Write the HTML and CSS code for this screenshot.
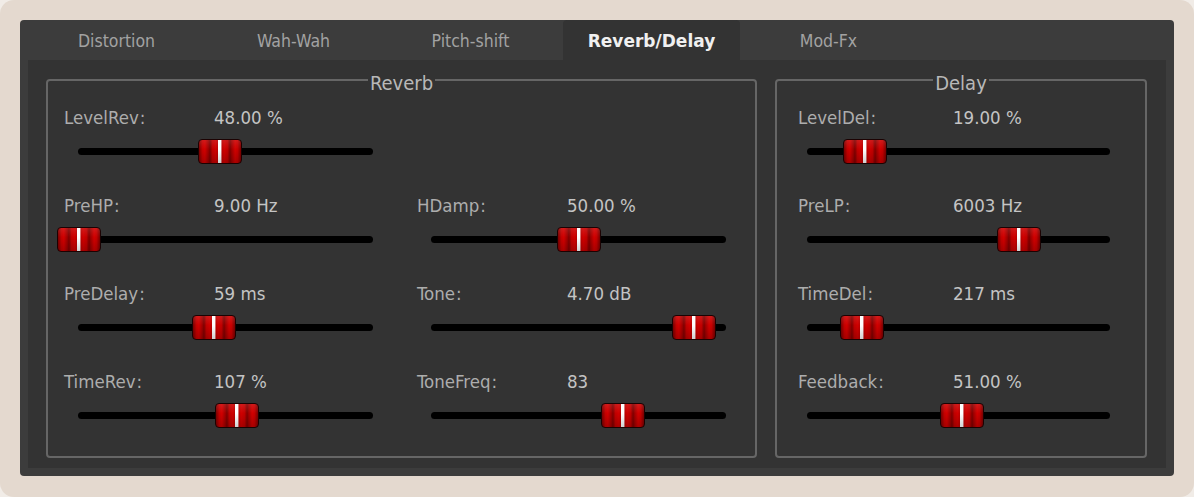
FILE: index.html
```html
<!DOCTYPE html>
<html>
<head>
<meta charset="utf-8">
<link rel="stylesheet" href="styles.css">
</head>
<body>
<div class="frame">
  <div class="panel">
    <div class="tabs">
      <div class="tab">Distortion</div>
      <div class="tab">Wah-Wah</div>
      <div class="tab">Pitch-shift</div>
      <div class="tab active">Reverb/Delay</div>
      <div class="tab">Mod-Fx</div>
    </div>
    <div class="content">
      <fieldset class="group reverb">
        <legend>Reverb</legend>
        <div class="grid">
          <div class="slider">
            <div class="head"><span class="label">LevelRev<span class="colon">:</span></span><span class="value">48.00 %</span></div>
            <div class="track"><div class="handle" style="--v:48%"></div></div>
          </div>
          <div class="slider empty"></div>
          <div class="slider">
            <div class="head"><span class="label">PreHP<span class="colon">:</span></span><span class="value">9.00 Hz</span></div>
            <div class="track"><div class="handle" style="--v:0.4%"></div></div>
          </div>
          <div class="slider">
            <div class="head"><span class="label">HDamp<span class="colon">:</span></span><span class="value">50.00 %</span></div>
            <div class="track"><div class="handle" style="--v:50%"></div></div>
          </div>
          <div class="slider">
            <div class="head"><span class="label">PreDelay<span class="colon">:</span></span><span class="value">59 ms</span></div>
            <div class="track"><div class="handle" style="--v:46%"></div></div>
          </div>
          <div class="slider">
            <div class="head"><span class="label">Tone<span class="colon">:</span></span><span class="value">4.70 dB</span></div>
            <div class="track"><div class="handle" style="--v:89%"></div></div>
          </div>
          <div class="slider">
            <div class="head"><span class="label">TimeRev<span class="colon">:</span></span><span class="value">107 %</span></div>
            <div class="track"><div class="handle" style="--v:54%"></div></div>
          </div>
          <div class="slider">
            <div class="head"><span class="label">ToneFreq<span class="colon">:</span></span><span class="value">83</span></div>
            <div class="track"><div class="handle" style="--v:65%"></div></div>
          </div>
        </div>
      </fieldset>
      <fieldset class="group delay">
        <legend>Delay</legend>
        <div class="grid">
          <div class="slider">
            <div class="head"><span class="label">LevelDel<span class="colon">:</span></span><span class="value">19.00 %</span></div>
            <div class="track"><div class="handle" style="--v:19%"></div></div>
          </div>
          <div class="slider">
            <div class="head"><span class="label">PreLP<span class="colon">:</span></span><span class="value">6003 Hz</span></div>
            <div class="track"><div class="handle" style="--v:70%"></div></div>
          </div>
          <div class="slider">
            <div class="head"><span class="label">TimeDel<span class="colon">:</span></span><span class="value">217 ms</span></div>
            <div class="track"><div class="handle" style="--v:18%"></div></div>
          </div>
          <div class="slider">
            <div class="head"><span class="label">Feedback<span class="colon">:</span></span><span class="value">51.00 %</span></div>
            <div class="track"><div class="handle" style="--v:51%"></div></div>
          </div>
        </div>
      </fieldset>
    </div>
  </div>
</div>
</body>
</html>
```
FILE: styles.css
```css
html, body {
  margin: 0;
  padding: 0;
  background: #f1ece7;
}
body {
  font-family: "DejaVu Sans Condensed", "DejaVu Sans", sans-serif;
  font-stretch: condensed;
}
.frame {
  width: 1194px;
  height: 497px;
  box-sizing: border-box;
  padding: 20px;
  background: #e4d9cf;
  border-radius: 14px;
}
.panel {
  height: 456px;
  box-sizing: border-box;
  background: #3c3c3c;
  border-radius: 4px;
  padding: 0 8px 8px;
  display: flex;
  flex-direction: column;
}
.tabs {
  display: flex;
  height: 40px;
  flex: none;
}
.tab {
  width: 177px;
  text-align: center;
  line-height: 43px;
  font-size: 17.5px;
  color: #a2a2a2;
  border-radius: 4px 4px 0 0;
}
.tab.active {
  margin-left: 4px;
  background: #333333;
  color: #f0f0f0;
  font-family: "DejaVu Sans", sans-serif;
  font-weight: bold;
  font-stretch: normal;
  font-size: 17px;
}
.content {
  flex: 1;
  background: #333333;
  display: flex;
  padding: 7px 19px 10px 18px;
  gap: 18px;
}
.group {
  margin: 0;
  border: 2px solid #666666;
  border-radius: 4px;
  padding: 0;
  min-width: 0;
}
.group legend {
  margin: 0 auto;
  padding: 6px 2px 0;
  font-size: 20px;
  line-height: 20px;
  color: #b8b8b8;
}
.reverb {
  width: 711px;
  box-sizing: border-box;
}
.delay {
  width: 372px;
  box-sizing: border-box;
}
.grid {
  display: grid;
  grid-auto-rows: 48px;
  row-gap: 40px;
  padding: 15px 0 0 16px;
}
.reverb .grid {
  grid-template-columns: 353px 353px;
}
.delay .grid {
  grid-template-columns: 340px;
  padding-left: 21px;
}
.slider {
  display: flex;
  flex-direction: column;
}
.head {
  display: flex;
  height: 20px;
  line-height: 20px;
  font-size: 18.5px;
}
.label {
  width: 150px;
  color: #adadad;
}
.colon {
  margin-left: 1px;
}
.delay .label {
  width: 155px;
}
.value {
  color: #c4c4c4;
}
.track {
  position: relative;
  margin: 20px 0 0 14px;
  width: 295px;
  height: 7px;
  border-radius: 4px;
  background: #000;
}
.delay .track {
  margin-left: 9px;
  width: 303px;
}
.handle {
  position: absolute;
  top: -9px;
  left: calc(var(--v) - 22px);
  width: 44px;
  height: 25px;
  box-sizing: border-box;
  border: 1px solid #1c0202;
  border-radius: 4px;
  background:
    linear-gradient(to bottom, rgba(255,255,255,0.10), rgba(0,0,0,0) 40%, rgba(0,0,0,0.18)),
    linear-gradient(to right,
      #7a0000 0%, #c40000 8%, #d20000 14%, #a00000 22%, #7e0000 26%,
      #c00000 32%, #d00000 40%, #b80000 45%, #ffffff 46%, #ffffff 53%,
      #b80000 54%, #d00000 60%, #c00000 68%, #7e0000 74%, #a00000 78%,
      #d20000 86%, #c40000 92%, #7a0000 100%);
}
```
